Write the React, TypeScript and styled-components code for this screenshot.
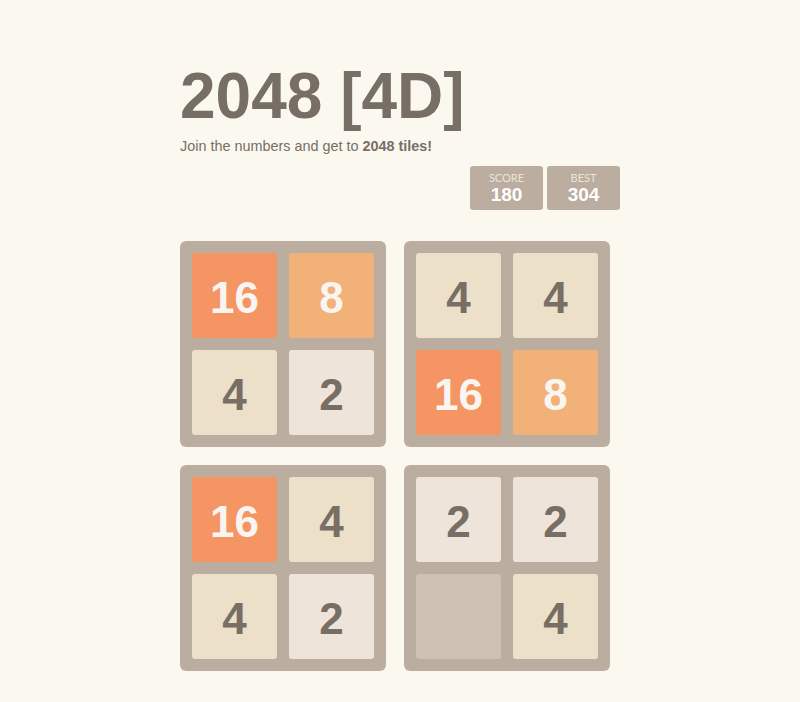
import { createGlobalStyle } from 'styled-components'
import styled from 'styled-components'

/* Global */
const GlobalStyle = createGlobalStyle`
  html, body {
    margin: 0;
    padding: 0;
    background: #faf8ef;
    color: #776e65;
    font-family: "Liberation Sans", Arial, sans-serif;
  }
`

/* Tile palette */
const TILE_COLORS: Record<number, { bg: string; fg: string }> = {
  0: { bg: '#cdc1b4', fg: 'transparent' },
  2: { bg: '#eee4da', fg: '#776e65' },
  4: { bg: '#ede0c8', fg: '#776e65' },
  8: { bg: '#f2b179', fg: '#f9f6f2' },
  16: { bg: '#f59563', fg: '#f9f6f2' }
}

/* Styled components */
const Page = styled.main`
  width: 440px;
  margin: 0 auto;
  padding-top: 64px;
`

const Title = styled.h1`
  margin: 0;
  font-size: 64px;
  line-height: 64px;
  font-weight: bold;
  color: #776e65;
`

const Intro = styled.p`
  margin: 8px 0 0 0;
  font-size: 14.4px;
  line-height: 20px;

  & strong {
    font-weight: bold;
  }
`

const ScoreRow = styled.div`
  display: flex;
  justify-content: flex-end;
  gap: 4px;
  margin-top: 10px;
`

const ScoreBox = styled.div`
  width: 73px;
  height: 44px;
  box-sizing: border-box;
  padding-top: 6px;
  background: #bbada0;
  border-radius: 3px;
  display: flex;
  flex-direction: column;
  align-items: center;

  & .label {
    font-family: Lato, "Open Sans", sans-serif;
    font-size: 11px;
    line-height: 12px;
    color: #eee4da;
    text-transform: uppercase;
  }

  & .value {
    font-size: 19px;
    line-height: 22px;
    font-weight: bold;
    color: #ffffff;
  }
`

const Boards = styled.div`
  display: grid;
  grid-template-columns: repeat(2, 206px);
  gap: 18px;
  margin-top: 31px;
`

const Board = styled.div`
  background: #bbada0;
  border-radius: 6px;
  padding: 12px;
  display: grid;
  grid-template-columns: repeat(2, 85px);
  grid-auto-rows: 85px;
  gap: 12px;
`

const Tile = styled.div<{ $value: number }>`
  box-sizing: border-box;
  padding-top: 5px;
  border-radius: 3px;
  background: ${p => TILE_COLORS[p.$value].bg};
  color: ${p => TILE_COLORS[p.$value].fg};
  display: flex;
  align-items: center;
  justify-content: center;
  font-size: 44px;
  font-weight: bold;
`

const BOARDS = [
  [16, 8, 4, 2],
  [4, 4, 16, 8],
  [16, 4, 4, 2],
  [2, 2, 0, 4]
]

export default function App() {
  return (
    <>
      <GlobalStyle />
      <Page>
        <Title>2048 [4D]</Title>
        <Intro>Join the numbers and get to <strong>2048 tiles!</strong></Intro>

        <ScoreRow>
          <ScoreBox>
            <span className='label'>Score</span>
            <span className='value'>180</span>
          </ScoreBox>
          <ScoreBox>
            <span className='label'>Best</span>
            <span className='value'>304</span>
          </ScoreBox>
        </ScoreRow>

        <Boards>
          {BOARDS.map((board, i) =>
            <Board key={i}>
              {board.map((value, j) =>
                <Tile key={j} $value={value}>{value > 0 ? value : ''}</Tile>
              )}
            </Board>
          )}
        </Boards>
      </Page>
    </>
  )
}
